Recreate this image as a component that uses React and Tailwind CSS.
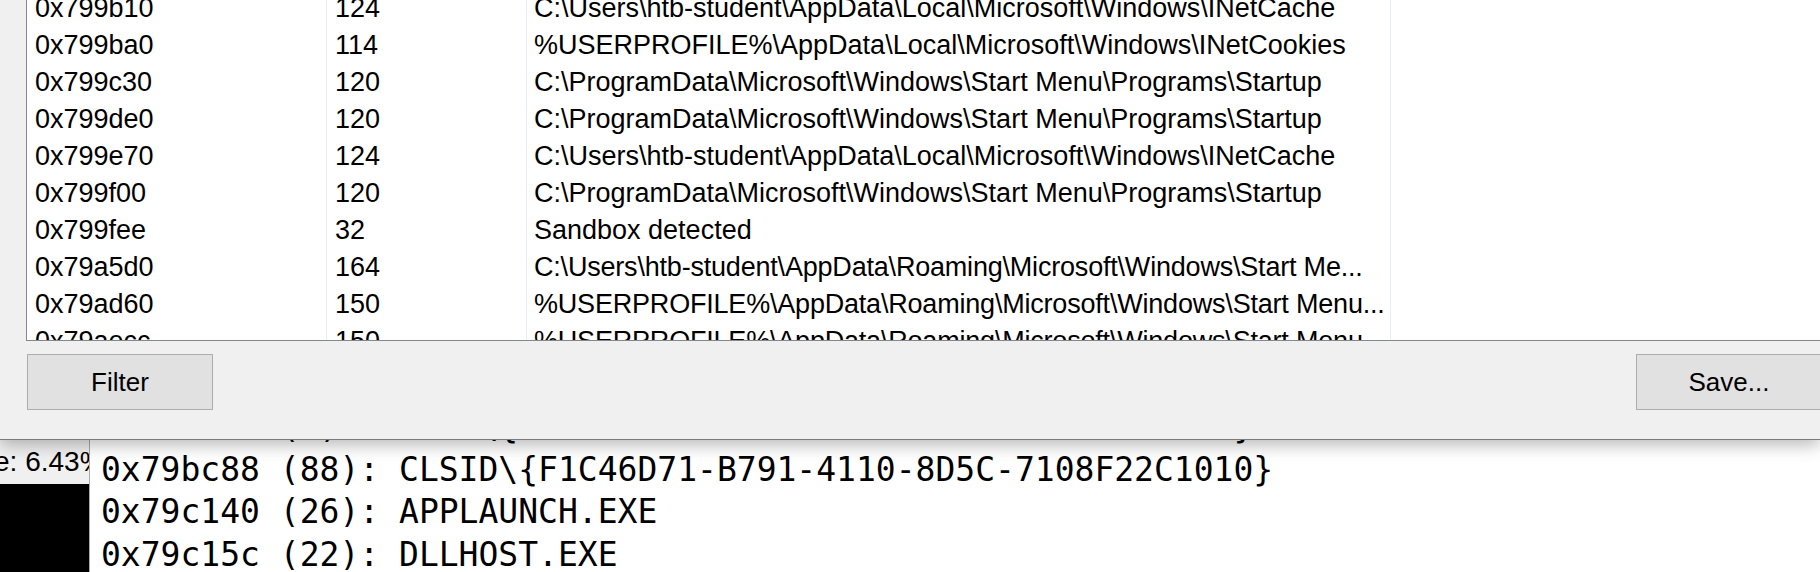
import React from "react";

const rows = [
  ["0x799b10", "124", "C:\\Users\\htb-student\\AppData\\Local\\Microsoft\\Windows\\INetCache"],
  ["0x799ba0", "114", "%USERPROFILE%\\AppData\\Local\\Microsoft\\Windows\\INetCookies"],
  ["0x799c30", "120", "C:\\ProgramData\\Microsoft\\Windows\\Start Menu\\Programs\\Startup"],
  ["0x799de0", "120", "C:\\ProgramData\\Microsoft\\Windows\\Start Menu\\Programs\\Startup"],
  ["0x799e70", "124", "C:\\Users\\htb-student\\AppData\\Local\\Microsoft\\Windows\\INetCache"],
  ["0x799f00", "120", "C:\\ProgramData\\Microsoft\\Windows\\Start Menu\\Programs\\Startup"],
  ["0x799fee", "32", "Sandbox detected"],
  ["0x79a5d0", "164", "C:\\Users\\htb-student\\AppData\\Roaming\\Microsoft\\Windows\\Start Me...", true],
  ["0x79ad60", "150", "%USERPROFILE%\\AppData\\Roaming\\Microsoft\\Windows\\Start Menu...", true],
  ["0x79aecc", "150", "%USERPROFILE%\\AppData\\Roaming\\Microsoft\\Windows\\Start Menu...", true],
];

const consoleLines = [
  "0x79bc30 (8): CLSID\\{0000031A-0000-0000-C000-000000000046}",
  "0x79bc88 (88): CLSID\\{F1C46D71-B791-4110-8D5C-7108F22C1010}",
  "0x79c140 (26): APPLAUNCH.EXE",
  "0x79c15c (22): DLLHOST.EXE",
];

export default function App() {
  return (
    <div className="w-[1820px] h-[572px] overflow-hidden bg-white flex flex-col text-black font-['Liberation_Sans',Arial,sans-serif]">
      {/* Dialog panel */}
      <div className="relative z-10 h-[440px] shrink-0 bg-[#f0f0f0] border-b border-[#7a7a7a] shadow-[0_5px_16px_rgba(0,0,0,0.28)] flex flex-col">
        <div className="ml-[26px] h-[341px] shrink-0 bg-white border-l border-b border-[#828790] overflow-hidden">
          <div className="-mt-[10px] flex flex-col">
            {rows.map((r, i) => (
              <div key={i} className="grid grid-cols-[300px_200px_864px_1fr] h-[37px] text-[27px] leading-[37px]">
                <div className="pl-2 border-r border-[#e6eef8] whitespace-nowrap overflow-hidden">{r[0]}</div>
                <div className="pl-2 border-r border-[#e6eef8] whitespace-nowrap overflow-hidden">{r[1]}</div>
                <div
                  className={
                    r[3]
                      ? "pl-[7px] border-r border-[#e6eef8] whitespace-nowrap overflow-hidden tracking-[-0.2px]"
                      : "pl-[7px] border-r border-[#e6eef8] whitespace-nowrap overflow-hidden"
                  }
                >
                  {r[2]}
                </div>
                <div />
              </div>
            ))}
          </div>
        </div>
        <div className="mt-[13px] flex items-start justify-between pl-[27px] -mr-[2px]">
          <button className="w-[186px] h-[56px] bg-[#e1e1e1] border border-[#adadad] text-[26px] flex items-center justify-center">
            Filter
          </button>
          <button className="w-[186px] h-[56px] bg-[#e1e1e1] border border-[#adadad] text-[26px] flex items-center justify-center">
            Save...
          </button>
        </div>
      </div>

      {/* Console behind */}
      <div className="flex flex-1 min-h-0">
        <div className="w-[90px] shrink-0 flex flex-col border-r border-[#a8a8a8]">
          <div className="h-[44px] bg-[#f0f0f0] flex items-center overflow-hidden">
            <span className="-ml-[6px] whitespace-nowrap text-[28px]">e: 6.43%</span>
          </div>
          <div className="flex-1 bg-black" />
        </div>
        <div className="flex-1 bg-white overflow-hidden">
          <div className="-mt-[34px] pl-[11px] font-['DejaVu_Sans_Mono',monospace] text-[33px] leading-[42.5px] whitespace-pre">
            {consoleLines.map((l, i) => (
              <div key={i}>{l}</div>
            ))}
          </div>
        </div>
      </div>
    </div>
  );
}
